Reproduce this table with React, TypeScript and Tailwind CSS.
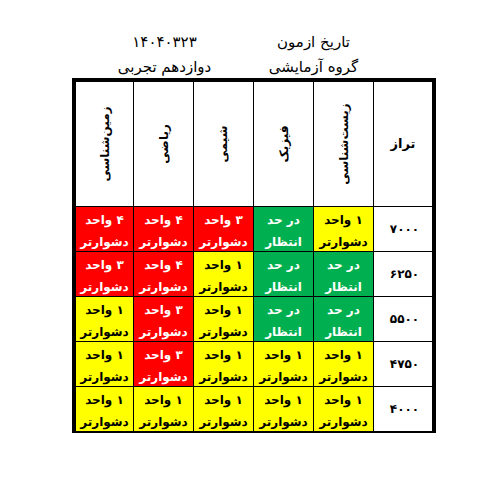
import React from 'react';

type Level = 'red' | 'yellow' | 'green';

interface Cell {
  level: Level;
  units?: string;
}

const subjects = ['زمین‌شناسی', 'ریاضی', 'شیمی', 'فیزیک', 'زیست‌شناسی'];

const rows: { score: string; cells: Cell[] }[] = [
  {
    score: '۷۰۰۰',
    cells: [
      { level: 'red', units: '۴' },
      { level: 'red', units: '۴' },
      { level: 'red', units: '۳' },
      { level: 'green' },
      { level: 'yellow', units: '۱' },
    ],
  },
  {
    score: '۶۲۵۰',
    cells: [
      { level: 'red', units: '۳' },
      { level: 'red', units: '۴' },
      { level: 'yellow', units: '۱' },
      { level: 'green' },
      { level: 'green' },
    ],
  },
  {
    score: '۵۵۰۰',
    cells: [
      { level: 'yellow', units: '۱' },
      { level: 'red', units: '۳' },
      { level: 'yellow', units: '۱' },
      { level: 'green' },
      { level: 'green' },
    ],
  },
  {
    score: '۴۷۵۰',
    cells: [
      { level: 'yellow', units: '۱' },
      { level: 'red', units: '۳' },
      { level: 'yellow', units: '۱' },
      { level: 'yellow', units: '۱' },
      { level: 'yellow', units: '۱' },
    ],
  },
  {
    score: '۴۰۰۰',
    cells: [
      { level: 'yellow', units: '۱' },
      { level: 'yellow', units: '۱' },
      { level: 'yellow', units: '۱' },
      { level: 'yellow', units: '۱' },
      { level: 'yellow', units: '۱' },
    ],
  },
];

const levelClass: Record<Level, string> = {
  red: 'bg-[#ff0000] text-white',
  yellow: 'bg-[#ffff00] text-black',
  green: 'bg-[#00b050] text-white',
};

const font = { fontFamily: '"DejaVu Sans", "Noto Sans", sans-serif' };

function StatusCell({ cell }: { cell: Cell }) {
  const lines = cell.level === 'green' ? ['در حد', 'انتظار'] : [`${cell.units} واحد`, 'دشوارتر'];
  return (
    <div
      dir="rtl"
      className={`h-[44px] flex flex-col items-center justify-center text-[12px] font-bold leading-[22px] pt-[3px] ${levelClass[cell.level]}`}
    >
      <span>{lines[0]}</span>
      <span>{lines[1]}</span>
    </div>
  );
}

export default function App() {
  return (
    <div className="w-[496px] h-[481px] bg-white text-black" style={font}>
      <div className="pt-[30px] pl-[76px]">
        {/* Exam info */}
        <div className="grid grid-cols-[57px_59px_59px_59px_59px_58px] gap-x-px text-[15px]" dir="ltr">
          <div className="col-span-3 flex flex-col items-center">
            <span className="h-[24px] leading-[24px] tracking-[1px]">۱۴۰۴۰۳۲۳</span>
            <span dir="rtl" className="h-[24px] pt-[2px] leading-[22px]">دوازدهم تجربی</span>
          </div>
          <div className="col-span-2 flex flex-col items-center">
            <span dir="rtl" className="h-[24px] leading-[24px]">تاریخ ازمون</span>
            <span dir="rtl" className="h-[24px] pt-[2px] leading-[22px]">گروه آزمایشی</span>
          </div>
        </div>
      </div>

      <div className="ml-[72px] w-[364px] border-l-4 border-r-4 border-t-4 border-b-2 border-black">
        <div className="grid grid-cols-[57px_59px_59px_59px_59px_58px] gap-px bg-black">
          {subjects.map((s) => (
            <div key={s} className="h-[124px] bg-white flex items-center justify-center">
              <span dir="rtl" className="inline-block -rotate-90 whitespace-nowrap text-[12px] font-bold">
                {s}
              </span>
            </div>
          ))}
          <div className="h-[124px] bg-white flex items-center justify-center">
            <span dir="rtl" className="text-[13px] font-bold">تراز</span>
          </div>

          {rows.map((row) => (
            <React.Fragment key={row.score}>
              {row.cells.map((c, i) => (
                <StatusCell key={i} cell={c} />
              ))}
              <div className="h-[44px] bg-white flex items-center justify-center">
                <span className="text-[12px] font-bold tracking-[3px] pl-[3px]">{row.score}</span>
              </div>
            </React.Fragment>
          ))}
        </div>
      </div>
    </div>
  );
}
